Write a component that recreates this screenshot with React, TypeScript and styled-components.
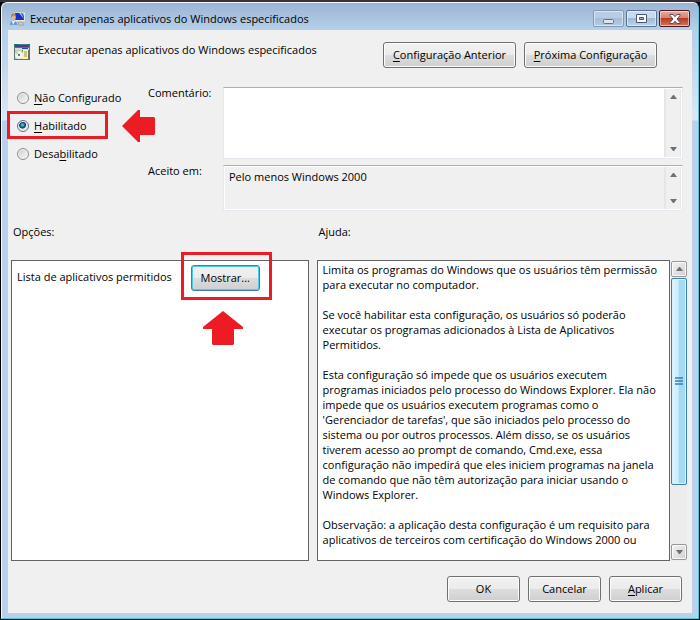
import React from "react";
import styled, { createGlobalStyle, css } from "styled-components";

const GlobalStyle = createGlobalStyle`
  *, *::before, *::after { box-sizing: border-box; }
  body {
    margin: 0;
    background: #000;
    color: #000;
    font: 11px/15px "Open Sans", "Noto Sans", sans-serif;
  }
  button, input, textarea { font: inherit; color: inherit; margin: 0; }
  u { text-underline-offset: 2px; text-decoration-thickness: 1px; text-decoration-skip-ink: none; }
`;

const Backdrop = styled.div`
  min-height: 100vh;
  display: flex;
  padding: 2px 1px 1px;
  background: linear-gradient(#38323c 0 2px, #000 2px);
`;

const Window = styled.main`
  flex: 1;
  min-width: 0;
  display: flex;
  flex-direction: column;
  padding: 0 6px 5px;
  border: 1px solid #f3f8fd;
  border-right-color: #35d3e8;
  border-bottom-color: #35d3e8;
  border-radius: 6px 6px 0 0;
  background: linear-gradient(#9ab4d3 0, #b7d0ea 27px, #b9d1ea 40px, #dce8f6 117px, #b9d1ea 118px);
`;

const TitleBar = styled.header`
  height: 27px;
  flex: none;
  display: flex;
  align-items: center;
  gap: 4px;
  padding: 4px 2px 0;
`;

const Title = styled.h1`
  flex: 1;
  margin: 0;
  font-size: 11px;
  font-weight: 400;
`;

const Captions = styled.div`
  display: flex;
  gap: 2px;
`;

const CaptionButton = styled.button<{ $kind: "min" | "max" | "close" }>`
  width: 31px;
  height: 17px;
  padding: 0;
  display: flex;
  align-items: center;
  justify-content: center;
  border: 1px solid #5a718f;
  border-radius: 2px;
  box-shadow: inset 0 0 0 1px #ffffff80;
  background: linear-gradient(#c9daec 0 45%, #9fb9d7 50%, #bdd4ec);
  ${(p) => p.$kind === "min" && css`border-color: #8298b4; background: linear-gradient(#b8cde4 0 45%, #a4bedb 50%, #b3cce7);`}
  ${(p) => p.$kind === "close" && css`border-color: #4b1724; background: linear-gradient(#e8a99d, #d98472 45%, #b93a22 50%, #d3765e);`}
`;

const Client = styled.div`
  flex: 1;
  display: flex;
  flex-direction: column;
  background: #f0f0f0;
  padding: 12px 5px 11px 3px;
`;

const Heading = styled.div`
  display: flex;
  align-items: flex-start;
  padding: 0 30px 0 3px;
  gap: 8px;
`;

const PolicyName = styled.h2`
  flex: 1;
  margin: 0;
  font-size: 11px;
  font-weight: 400;
`;

const PolicyIcon = styled.span`
  display: flex;
  padding-top: 2px;
`;

const Button = styled.button<{ $wide?: boolean; $focus?: boolean }>`
  height: 26px;
  min-width: ${(p) => (p.$wide ? 133 : 73)}px;
  padding: 0 6px 1px;
  white-space: nowrap;
  border: 1px solid #707070;
  border-radius: 3px;
  box-shadow: inset 0 0 0 1px #fcfcfc;
  background: linear-gradient(#f2f2f2, #ebebeb 50%, #dddddd 50%, #cfcfcf);
  ${(p) => p.$focus && css`border-color: #3c7fb1; box-shadow: inset 0 0 0 1px #46cdf5;`}
`;

const Form = styled.div`
  display: grid;
  grid-template-columns: 137px 75px minmax(0, 1fr);
  margin-top: 17px;
  padding-right: 4px;
`;

const Choices = styled.fieldset`
  grid-row: 1 / 3;
  margin: 0;
  border: 0;
  min-width: 0;
  padding: 5px 0 0 6px;
  display: flex;
  flex-direction: column;
  gap: 13px;
`;

const Choice = styled.label`
  position: relative;
  display: flex;
  align-items: center;
  gap: 5px;
  height: 15px;
`;

const Radio = styled.input`
  appearance: none;
  width: 12px;
  height: 12px;
  border: 1px solid #8e8f8f;
  border-radius: 50%;
  box-shadow: inset 0 0 0 1px #f4f4f4;
  background: linear-gradient(135deg, #c8ccd0, #fbfbfb);
  &:checked {
    border-color: #5d6f80;
    background: radial-gradient(circle at 45% 40%, #7fd6f5 0, #1c6d99 2px, #0c3350 3px, #dfe6ea 4px);
  }
`;

const Highlight = styled.span<{ $target: "choice" | "button" }>`
  position: absolute;
  border: 3px solid #ed1c24;
  pointer-events: none;
  ${(p) => (p.$target === "choice" ? css`inset: -7px 40px -6px -10px;` : css`inset: -13px -12px -9px -10px;`)}
`;

const Pointer = styled.svg<{ $target: "choice" | "button" }>`
  position: absolute;
  fill: #ed1c24;
  pointer-events: none;
  ${(p) => (p.$target === "choice" ? css`left: 105px; top: -8px;` : css`left: 12px; top: 46px;`)}
`;

const FieldLabel = styled.label`
  display: block;
`;

const Field = styled.div<{ $readOnly?: boolean }>`
  display: flex;
  height: ${(p) => (p.$readOnly ? 46 : 72)}px;
  margin-top: 2px;
  margin-bottom: ${(p) => (p.$readOnly ? 0 : 4)}px;
  border: 1px solid #e3e9ef;
  border-top-color: #abadb3;
  background: ${(p) => (p.$readOnly ? "#f0f0f0" : "#fff")};
  box-shadow: ${(p) => (p.$readOnly ? "inset 0 0 0 1px #fff" : "none")};
`;

const TextArea = styled.textarea`
  flex: 1;
  min-width: 0;
  border: 0;
  outline: 0;
  padding: 3px 5px;
  resize: none;
  overflow: hidden;
  background: transparent;
`;

const DisabledBar = styled.div`
  width: 17px;
  margin: 1px;
  padding: 6px 0;
  display: flex;
  flex-direction: column;
  align-items: center;
  justify-content: space-between;
  border-left: 2px solid #e6e6e6;
  border-right: 1px solid #e6e6e6;
  background: #f0f0f0;
`;

const Panels = styled.div`
  flex: 1;
  display: grid;
  grid-template-columns: minmax(0, 298fr) minmax(0, 371fr);
  grid-template-rows: auto 1fr;
  column-gap: 8px;
  row-gap: 21px;
  margin-top: 13px;
`;

const PanelLabel = styled.h3`
  margin: 0;
  padding: 0 2px;
  font-size: 11px;
  font-weight: 400;
`;

const Options = styled.section`
  display: flex;
  align-items: flex-start;
  gap: 19px;
  padding: 4px 5px;
  border: 1px solid #646464;
  background: #fff;
`;

const OptionText = styled.span`
  padding-top: 4px;
`;

const ButtonSpot = styled.div`
  position: relative;
  display: flex;
`;

const ShowButton = styled(Button)`
  min-width: 69px;
`;

const HelpArea = styled.section`
  display: flex;
  gap: 1px;
`;

const HelpText = styled.div`
  flex: 1;
  min-width: 0;
  padding: 1px 5px;
  border: 1px solid #646464;
  background: #fff;
`;

const Paragraph = styled.p`
  margin: 0;
  & + & { margin-top: 15px; }
`;

const ScrollBar = styled.div`
  width: 16px;
  display: flex;
  flex-direction: column;
  gap: 1px;
  padding: 1px 0;
  background: #ececec;
`;

const ScrollButton = styled.button`
  height: 16px;
  width: 16px;
  flex: none;
  padding: 0;
  display: flex;
  align-items: center;
  justify-content: center;
  border: 1px solid #979797;
  border-radius: 2px;
  box-shadow: inset 0 0 0 1px #fafafa;
  background: linear-gradient(135deg, #f3f3f3, #d0d0d0);
`;

const Track = styled.div`
  flex: 1;
`;

const Thumb = styled.div`
  height: 78%;
  max-height: 210px;
  display: flex;
  align-items: center;
  justify-content: center;
  border: 1px solid #3c7fb1;
  border-radius: 2px;
  box-shadow: inset 0 0 0 1px #d5f1fd;
  background: linear-gradient(90deg, #e3f4fc, #c9edfd 45%, #a4d9f3 50%, #a8dcf6);
`;

const Footer = styled.footer`
  display: flex;
  justify-content: flex-end;
  gap: 8px;
  margin-top: 15px;
  padding-right: 5px;
`;

const Triangle = ({ down }: { down?: boolean }) => (
  <svg width="7" height="4" viewBox="0 0 7 4" aria-hidden="true">
    <path d={down ? "M0 0H7L4 4H3Z" : "M0 4H7L4 0H3Z"} fill="#707070" />
  </svg>
);

const FieldBar = () => (
  <DisabledBar>
    <Triangle />
    <Triangle down />
  </DisabledBar>
);

const MonitorIcon = () => (
  <svg width="16" height="16" viewBox="0 0 16 16" aria-hidden="true">
    <path d="M4 1H15.5V11H4Z" fill="#e9e8df" stroke="#a4adb5" strokeWidth=".6" />
    <path d="M5 2H14V9H5Z" fill="#1237bd" />
    <path d="M9 2H14V8Z" fill="#a4c5fa" />
    <path d="M11 2H12L14 5V8Z" fill="#244edb" />
    <path d="M9 11H12L14 14H8Z" fill="#d0cdc0" stroke="#858677" strokeWidth=".5" />
    <path d="M0 14Q0 10 3 10Q7 10 7 14Z" fill="#5f9bd0" />
    <path d="M2 10L3 14L5 10Z" fill="#eef5fa" />
    <ellipse cx="3.5" cy="6.5" rx="2.3" ry="3" fill="#e2b58b" />
    <path d="M1 7Q.5 2.5 3.5 2.5Q6.5 2.5 5.5 5L3 4.5Z" fill="#a38467" />
  </svg>
);

const ProgramIcon = () => (
  <svg width="16" height="16" viewBox="0 0 16 16" aria-hidden="true">
    <path d="M0 0H16V16H0Z" fill="#62736d" />
    <path d="M1 1H15V3H1Z" fill="#4b3d86" />
    <path d="M0 0H5V1H0ZM14 0H16V2H14Z" fill="#008080" />
    <path d="M1 4H15V6H1Z" fill="#d8ddcc" />
    <path d="M8 4H14V5H8Z" fill="#244caa" />
    <path d="M1 6H8V15H1Z" fill="#bfc9bf" />
    <circle cx="5" cy="11" r="4" fill="#eef4ef" />
    <path d="M5 11L1.5 9A4 4 0 0 1 3 7.5Z" fill="#a8d4a8" />
    <circle cx="5" cy="11" r="1" fill="#415a51" />
    <path d="M9 6H14V15H8V12Z" fill="#fff1b4" />
    <path d="M10 8H13M10 10H13M10 12H13" stroke="#a58b47" />
  </svg>
);

const paragraphs: string[][] = [
  ["Limita os programas do Windows que os usuários têm permissão", "para executar no computador."],
  ["Se você habilitar esta configuração, os usuários só poderão", "executar os programas adicionados à Lista de Aplicativos", "Permitidos."],
  [
    "Esta configuração só impede que os usuários executem",
    "programas iniciados pelo processo do Windows Explorer. Ela não",
    "impede que os usuários executem programas como o",
    "'Gerenciador de tarefas', que são iniciados pelo processo do",
    "sistema ou por outros processos. Além disso, se os usuários",
    "tiverem acesso ao prompt de comando, Cmd.exe, essa",
    "configuração não impedirá que eles iniciem programas na janela",
    "de comando que não têm autorização para iniciar usando o",
    "Windows Explorer.",
  ],
  ["Observação: a aplicação desta configuração é um requisito para", "aplicativos de terceiros com certificação do Windows 2000 ou"],
];

export default function App() {
  return (
    <Backdrop>
      <GlobalStyle />
      <Window>
        <TitleBar>
          <MonitorIcon />
          <Title>Executar apenas aplicativos do Windows especificados</Title>
          <Captions>
            <CaptionButton $kind="min" aria-label="Minimizar">
              <svg width="11" height="13" viewBox="0 0 11 13"><rect x=".5" y="7.5" width="10" height="4" rx="1" fill="#e4e4e4" stroke="#68707c" /></svg>
            </CaptionButton>
            <CaptionButton $kind="max" aria-label="Maximizar">
              <svg width="11" height="9" viewBox="0 0 11 9"><path d="M.5.5H10.5V8.5H.5Z" fill="#fff" stroke="#4d5470" /><path d="M3.5 3.5H7.5V5.5H3.5Z" fill="#8fa9c8" stroke="#4d5470" /></svg>
            </CaptionButton>
            <CaptionButton $kind="close" aria-label="Fechar">
              <svg width="12" height="10" viewBox="0 0 12 10"><path d="M1 .5H4L6 2.7L8 .5H11V1.5L8 5L11 8.5V9.5H8L6 7.3L4 9.5H1V8.5L4 5L1 1.5Z" fill="#fff" stroke="#504e60" /></svg>
            </CaptionButton>
          </Captions>
        </TitleBar>
        <Client>
          <Heading>
            <PolicyIcon><ProgramIcon /></PolicyIcon>
            <PolicyName>Executar apenas aplicativos do Windows especificados</PolicyName>
            <Button $wide><u>C</u>onfiguração Anterior</Button>
            <Button $wide><u>P</u>róxima Configuração</Button>
          </Heading>
          <Form>
            <Choices aria-label="Estado">
              <Choice>
                <Radio type="radio" name="state" />
                <span><u>N</u>ão Configurado</span>
              </Choice>
              <Choice>
                <Radio type="radio" name="state" defaultChecked />
                <span><u>H</u>abilitado</span>
                <Highlight $target="choice" />
                <Pointer $target="choice" width="33" height="32" viewBox="0 0 33 32" aria-hidden="true">
                  <path d="M0 16L16 0H18V7H32L33 8V24L32 25H18V32H16Z" />
                </Pointer>
              </Choice>
              <Choice>
                <Radio type="radio" name="state" />
                <span>Desa<u>b</u>ilitado</span>
              </Choice>
            </Choices>
            <FieldLabel htmlFor="comment">Comentário:</FieldLabel>
            <Field>
              <TextArea id="comment" />
              <FieldBar />
            </Field>
            <FieldLabel htmlFor="supported">Aceito em:</FieldLabel>
            <Field $readOnly>
              <TextArea id="supported" readOnly defaultValue="Pelo menos Windows 2000" />
              <FieldBar />
            </Field>
          </Form>
          <Panels>
            <PanelLabel>Opções:</PanelLabel>
            <PanelLabel>Ajuda:</PanelLabel>
            <Options>
              <OptionText>Lista de aplicativos permitidos</OptionText>
              <ButtonSpot>
                <ShowButton $focus>Mostrar...</ShowButton>
                <Highlight $target="button" />
                <Pointer $target="button" width="40" height="34" viewBox="0 0 40 34" aria-hidden="true">
                  <path d="M20 0L40 16V18H31V33L30 34H10L9 33V18H0V16Z" />
                </Pointer>
              </ButtonSpot>
            </Options>
            <HelpArea>
              <HelpText>
                {paragraphs.map((lines) => (
                  <Paragraph key={lines[0]}>
                    {lines.map((line, i) => (
                      <React.Fragment key={line}>{i > 0 && <br />}{line}</React.Fragment>
                    ))}
                  </Paragraph>
                ))}
              </HelpText>
              <ScrollBar>
                <ScrollButton aria-label="Rolar para cima"><Triangle /></ScrollButton>
                <Track>
                  <Thumb>
                    <svg width="8" height="8" viewBox="0 0 8 8" aria-hidden="true"><path d="M0 1H8M0 4H8M0 7H8" stroke="#3a7fa8" strokeWidth="1.5" /></svg>
                  </Thumb>
                </Track>
                <ScrollButton aria-label="Rolar para baixo"><Triangle down /></ScrollButton>
              </ScrollBar>
            </HelpArea>
          </Panels>
          <Footer>
            <Button>OK</Button>
            <Button>Cancelar</Button>
            <Button><u>A</u>plicar</Button>
          </Footer>
        </Client>
      </Window>
    </Backdrop>
  );
}
